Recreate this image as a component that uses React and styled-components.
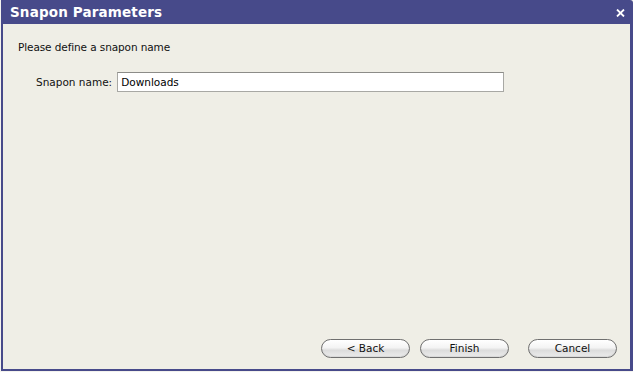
import React from "react";
import styled, { createGlobalStyle } from "styled-components";

const Global = createGlobalStyle`
  html, body { margin: 0; padding: 0; background: #f4f3ee; }
  body { width: 633px; height: 372px; overflow: hidden; font-family: "DejaVu Sans", "Liberation Sans", sans-serif; }
`;

const Window = styled.div`
  box-sizing: border-box;
  margin-left: 1px;
  width: 632px;
  height: 371px;
  display: flex;
  flex-direction: column;
  background: #474a8a;
  border-radius: 0 3px 0 0;
  padding: 0 3px 2px 2px;
`;

const TitleBar = styled.div`
  height: 24px;
  flex: none;
  display: flex;
  align-items: center;
  justify-content: space-between;
  padding: 0 5px 0 7px;
`;

const Title = styled.div`
  color: #ffffff;
  font-family: "DejaVu Sans", "Verdana", sans-serif;
  font-weight: bold;
  font-size: 13.5px;
  letter-spacing: 0.15px;
`;

const Close = styled.svg`
  width: 9px;
  height: 8px;
  margin-top: 1px;
`;

const Body = styled.div`
  flex: 1;
  background: #efeee6;
  display: flex;
  flex-direction: column;
  padding: 16px 0 11px 15px;
  font-size: 10.5px;
  color: #111;
`;

const Intro = styled.div`
  line-height: 14px;
  letter-spacing: -0.1px;
`;

const FieldRow = styled.div`
  display: flex;
  align-items: center;
  margin-top: 18px;
  padding-left: 18px;
`;

const Label = styled.label`
  margin-right: 5px;
`;

const Input = styled.input`
  box-sizing: border-box;
  width: 387px;
  height: 20px;
  padding: 0 3px;
  border: 1px solid #a8a8a4;
  border-top-color: #8c8c88;
  background: #fff;
  font-family: "DejaVu Sans", sans-serif;
  font-size: 10.5px;
  color: #000;
  outline: none;
`;

const Spacer = styled.div`
  flex: 1;
`;

const Buttons = styled.div`
  display: flex;
  justify-content: flex-end;
  padding-right: 13px;
  gap: 10px;
`;

const Button = styled.button`
  box-sizing: border-box;
  width: 89px;
  height: 19px;
  margin-left: ${(p) => (p.$wide ? "9px" : "0")};
  border: 1px solid #6f6f6f;
  border-radius: 10px;
  background: linear-gradient(#ffffff 0%, #f4f4f4 45%, #dcdcdc 60%, #ececec 100%);
  font-family: "DejaVu Sans", sans-serif;
  font-size: 10.5px;
  color: #111;
  padding: 0;
  line-height: 17px;
  box-shadow: inset 0 -1px 1px rgba(0,0,0,0.08);
`;

export default function App() {
  return (
    <>
      <Global />
      <Window>
        <TitleBar>
          <Title>Snapon Parameters</Title>
          <Close viewBox="0 0 9 8">
            <path d="M1 0.5 L8 7.5 M8 0.5 L1 7.5" stroke="#fff" strokeWidth="1.8" />
          </Close>
        </TitleBar>
        <Body>
          <Intro>Please define a snapon name</Intro>
          <FieldRow>
            <Label>Snapon name:</Label>
            <Input defaultValue="Downloads" />
          </FieldRow>
          <Spacer />
          <Buttons>
            <Button>&lt; Back</Button>
            <Button>Finish</Button>
            <Button $wide>Cancel</Button>
          </Buttons>
        </Body>
      </Window>
    </>
  );
}
